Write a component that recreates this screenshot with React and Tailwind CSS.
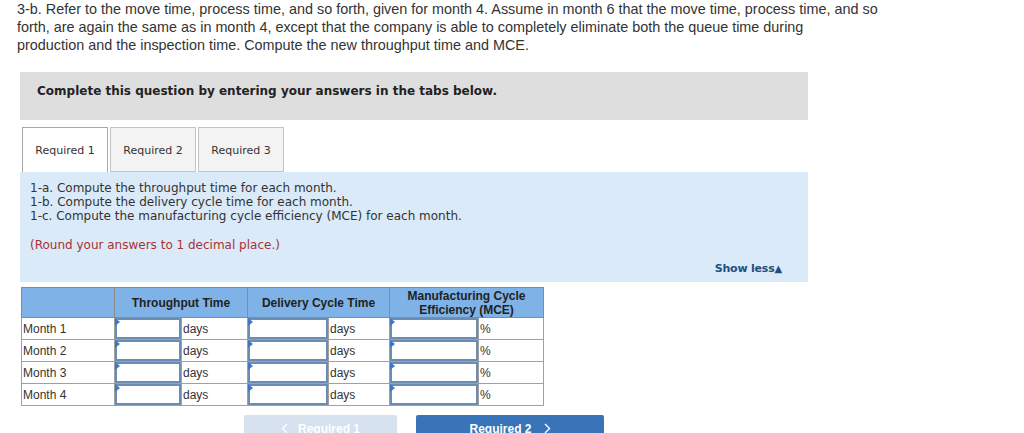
import React from 'react'

const rows = ['Month 1', 'Month 2', 'Month 3', 'Month 4']

function AnswerInput() {
  return (
    <td className="relative h-[22px] border border-[#a0a0a0] p-0">
      <div className="absolute left-0 top-0 h-0 w-0 border-y-[4px] border-l-[5px] border-y-transparent border-l-[#3d78c0]" />
      <div className="h-full w-full border-2 border-[#6c8db3] bg-white" />
    </td>
  )
}

function Unit({ children }) {
  return (
    <td className="h-[22px] border border-[#a0a0a0] bg-white px-[1px] text-left text-[12px] leading-none text-[#333]">
      {children}
    </td>
  )
}

function Chevron({ dir }) {
  return (
    <svg width="7" height="11" viewBox="0 0 7 11" fill="none" stroke="currentColor" strokeWidth="1.4">
      {dir === 'left' ? <path d="M6 1 L1.5 5.5 L6 10" /> : <path d="M1 1 L5.5 5.5 L1 10" />}
    </svg>
  )
}

export default function App() {
  return (
    <div className="h-[433px] w-[1024px] overflow-hidden bg-white" style={{ fontFamily: '"Liberation Sans", Arial, sans-serif' }}>
      {/* question text */}
      <div className="ml-[17px] pt-0 text-[14.4px] leading-[18px] text-[#333]">
        <p className="whitespace-nowrap">3-b. Refer to the move time, process time, and so forth, given for month 4. Assume in month 6 that the move time, process time, and so</p>
        <p className="whitespace-nowrap">forth, are again the same as in month 4, except that the company is able to completely eliminate both the queue time during</p>
        <p className="whitespace-nowrap">production and the inspection time. Compute the new throughput time and MCE.</p>
      </div>

      <div className="ml-[20px] w-[788px]">
        {/* instruction bar */}
        <div className="mt-[18px] h-[48px] bg-[#dedede] pl-[17px] pt-[12px] text-[12px] font-bold leading-[14px] text-[#222]" style={{ fontFamily: '"DejaVu Sans", Verdana, sans-serif' }}>
          Complete this question by entering your answers in the tabs below.
        </div>

        {/* tabs */}
        <div className="mt-[7px] flex gap-[2px] pl-[2px]" style={{ fontFamily: '"DejaVu Sans", Verdana, sans-serif' }}>
          <div className="flex h-[45px] w-[86px] items-center justify-center border border-b-0 border-[#a8a8a8] bg-white pt-[3px] text-[11px] text-[#333]">
            Required 1
          </div>
          <div className="flex h-[45px] w-[86px] items-center justify-center border border-[#c4c4c4] bg-[#f3f3f3] pt-[3px] text-[11px] text-[#333]">
            Required 2
          </div>
          <div className="flex h-[45px] w-[86px] items-center justify-center border border-[#c4c4c4] bg-[#f3f3f3] pt-[3px] text-[11px] text-[#333]">
            Required 3
          </div>
        </div>

        {/* instructions panel */}
        <div className="h-[110px] bg-[#dbeaf8] pl-[10px] pt-[9px]" style={{ fontFamily: '"DejaVu Sans", Verdana, sans-serif' }}>
          <p className="text-[12px] leading-[14px] text-[#333]">1-a. Compute the throughput time for each month.</p>
          <p className="text-[12px] leading-[14px] text-[#333]">1-b. Compute the delivery cycle time for each month.</p>
          <p className="text-[12px] leading-[14px] text-[#333]">1-c. Compute the manufacturing cycle efficiency (MCE) for each month.</p>
          <p className="mt-[15px] text-[12px] leading-[14px] text-[#a83232]">(Round your answers to 1 decimal place.)</p>
          <div className="mr-[26px] mt-[9px] flex justify-end text-[11px] font-bold tracking-[-0.2px] text-[#1d4f80]">
            Show less<span className="text-[10px]">▲</span>
          </div>
        </div>
      </div>

      {/* answer table */}
      <table className="ml-[21px] mt-[5px] border-collapse">
        <thead>
          <tr className="h-[30px] bg-[#7fb2e6] text-[12px] font-bold leading-[14px] text-[#222]">
            <th className="w-[93px] border border-[#8a8a8a]" />
            <th colSpan={2} className="border border-[#8a8a8a]">Throughput Time</th>
            <th colSpan={2} className="border border-[#8a8a8a]">Delivery Cycle Time</th>
            <th colSpan={2} className="border border-[#8a8a8a]">Manufacturing Cycle<br />Efficiency (MCE)</th>
          </tr>
        </thead>
        <tbody>
          {rows.map((m) => (
            <tr key={m}>
              <td className="h-[22px] w-[93px] border border-[#a0a0a0] px-[1px] text-[12px] leading-none text-[#333]">{m}</td>
              <AnswerInput />
              <Unit>days</Unit>
              <AnswerInput />
              <Unit>days</Unit>
              <AnswerInput />
              <Unit>%</Unit>
            </tr>
          ))}
        </tbody>
      </table>
      <style>{`
        table td:nth-child(2){width:67px}
        table td:nth-child(3){width:66px}
        table td:nth-child(4){width:81px}
        table td:nth-child(5){width:61px}
        table td:nth-child(6){width:89px}
        table td:nth-child(7){width:65px}
      `}</style>

      {/* navigation */}
      <div className="ml-[244px] mt-[9px] flex gap-[19px] text-[12px] font-bold leading-[14px]">
        <div className="flex h-[26px] w-[153px] items-start justify-center gap-[10px] rounded-t-[2px] bg-[#d6e2ef] pt-[7px] text-white">
          <span className="pt-[1px]"><Chevron dir="left" /></span> Required 1
        </div>
        <div className="flex h-[26px] w-[188px] items-start justify-center gap-[12px] rounded-t-[2px] bg-[#3a74b8] pt-[7px] text-white">
          Required 2 <span className="pt-[1px]"><Chevron dir="right" /></span>
        </div>
      </div>
    </div>
  )
}
